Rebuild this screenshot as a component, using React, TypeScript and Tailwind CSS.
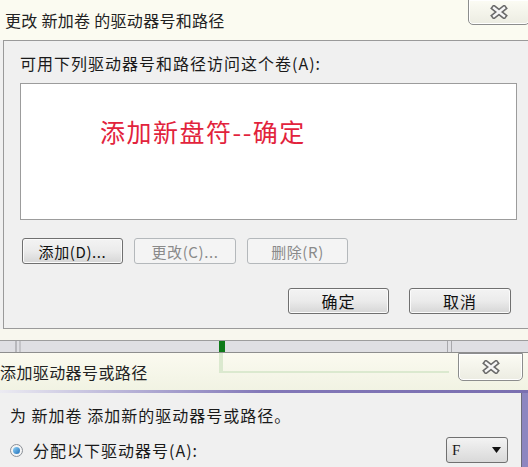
const font = "font-['Noto_Sans_CJK_SC','Noto_Sans',sans-serif]";

function CloseButton({ className }: { className: string }) {
  return (
    <div
      className={`flex items-center justify-center border border-[#8c8d8d] rounded-b-[5px] bg-gradient-to-b from-[#fcfcf4] to-[#ecece2] shadow-[inset_0_0_0_1px_#ffffff] ${className}`}
    >
      <svg width="18" height="14" viewBox="0 0 18 14">
        <path d="M4 3 L14 11 M14 3 L4 11" stroke="#6a6a6a" strokeWidth="5.5" strokeLinecap="square" />
        <path d="M4 3 L14 11 M14 3 L4 11" stroke="#f6f6f6" strokeWidth="2.4" strokeLinecap="square" />
      </svg>
    </div>
  );
}

type BtnProps = { label: string; width: string; disabled?: boolean; big?: boolean };

function Btn({ label, width, disabled, big }: BtnProps) {
  return (
    <div
      className={`${width} h-[26px] flex items-center justify-center rounded-[3px] border leading-none ${
        big ? "text-[16px] tracking-[1px]" : "text-[15px] tracking-[0.6px]"
      } ${
        disabled
          ? "border-[#b4b8bb] bg-[#f4f4f4] text-[#8a8a8a]"
          : "border-[#707070] bg-gradient-to-b from-[#f3f3f3] via-[#ebebeb] to-[#d6d6d6] text-[#111] shadow-[inset_0_0_0_1px_#fbfbfb]"
      }`}
    >
      {label}
    </div>
  );
}

export default function App() {
  return (
    <div className={`w-[528px] h-[467px] overflow-hidden bg-[#f0f0f0] text-[#1a1a1a] ${font}`}>
      {/* first dialog */}
      <div className="flex flex-col">
        <div className="h-[40px] flex items-start bg-[#fbfbf1]">
          <span className="pl-[5px] pt-[9px] text-[16px] leading-[22px] tracking-[0.3px] text-[#222]">
            更改 新加卷 的驱动器号和路径
          </span>
          <CloseButton className="ml-auto w-[62px] h-[26px] -mt-px -mr-[2px]" />
        </div>
        <div className="ml-[3px] h-[289px] border-l border-t border-b border-[#9a9a9a] bg-[#f0f0f0] flex flex-col pl-[16px]">
          <div className="mt-[12px] h-[20px] text-[16px] leading-[20px] tracking-[1px]">
            可用下列驱动器号和路径访问这个卷(A):
          </div>
          <div className="mt-[10px] w-[497px] h-[137px] border border-[#9c9c9c] bg-white pl-[79px] pt-[32px]">
            <span className="text-[25px] leading-[30px] tracking-[1.5px] text-[#e2233c]">添加新盘符--确定</span>
          </div>
          <div className="mt-[18px] ml-[2px] flex gap-[11px]">
            <Btn label="添加(D)..." width="w-[101px]" />
            <Btn label="更改(C)..." width="w-[102px]" disabled />
            <Btn label="删除(R)" width="w-[101px]" disabled />
          </div>
          <div className="mt-[24px] pr-[17px] flex justify-end gap-[20px]">
            <Btn label="确定" width="w-[101px]" big />
            <Btn label="取消" width="w-[102px]" big />
          </div>
        </div>
      </div>

      {/* background window strip */}
      <div className="h-[11px] bg-[#f8f7ee]" />
      <div className="h-[13px] flex border-t border-b border-t-[#9d9d9d] border-b-[#8e8e8e] bg-[#dfdfe3]">
        <div className="ml-[15px] w-[8px] flex gap-[2px]">
          <div className="w-[2px] bg-[#b8b8bc]" />
          <div className="w-[2px] bg-[#c4c4c8]" />
        </div>
        <div className="ml-[196px] w-[6px] bg-[#0d7a18]" />
        <div className="ml-[222px] w-[8px] flex gap-[3px]">
          <div className="w-[1px] bg-[#a8a8ac]" />
          <div className="w-[1px] bg-[#a8a8ac]" />
        </div>
      </div>

      {/* second dialog */}
      <div className="relative h-[37px] flex items-start bg-gradient-to-b from-[#fbfaf0] to-[#f1f3e3]">
        <div className="absolute left-[219px] top-0 w-[230px] h-[20px] border-l-[4px] border-b-[2px] border-[#dbe9cf]" />
        <span className="relative pt-[8px] text-[16px] leading-[22px] tracking-[0.4px] text-[#222]">添加驱动器号或路径</span>
        <CloseButton className="relative ml-auto mr-[5px] w-[65px] h-[28px]" />
      </div>
      <div className="h-[3px] bg-gradient-to-r from-[#ecebf2] via-[#8378b8] to-[#7a6fb0]" />
      <div className="flex h-[74px]">
        <div className="w-[522px] border-r border-[#6c6c78] bg-[#f0f0f0] flex flex-col pl-[10px] pr-[13px]">
          <div className="mt-[12px] h-[20px] text-[16px] leading-[20px] tracking-[1px]">
            为 新加卷 添加新的驱动器号或路径。
          </div>
          <div className="mt-[12px] h-[26px] flex items-center">
            <div className="w-[13px] h-[13px] rounded-full border border-[#8a8f96] bg-[#f4f4f4] flex items-center justify-center">
              <div className="w-[7px] h-[7px] rounded-full bg-gradient-to-br from-[#8fd3f8] to-[#1c6fb8]" />
            </div>
            <span className="ml-[10px] text-[16px] leading-[20px] tracking-[1px]">分配以下驱动器号(A):</span>
            <div className="ml-auto w-[62px] h-[26px] rounded-[3px] border border-[#707070] bg-gradient-to-b from-[#f3f3f3] to-[#d9d9d9] flex items-center px-[5px]">
              <span className="font-['Liberation_Serif',serif] text-[15px] leading-none">F</span>
              <svg className="ml-auto mr-[1px]" width="9" height="6" viewBox="0 0 9 6">
                <path d="M0 0 H9 L4.5 6 Z" fill="#111" />
              </svg>
            </div>
          </div>
        </div>
        <div className="flex-1 bg-[#8d86c0]" />
      </div>
    </div>
  );
}
